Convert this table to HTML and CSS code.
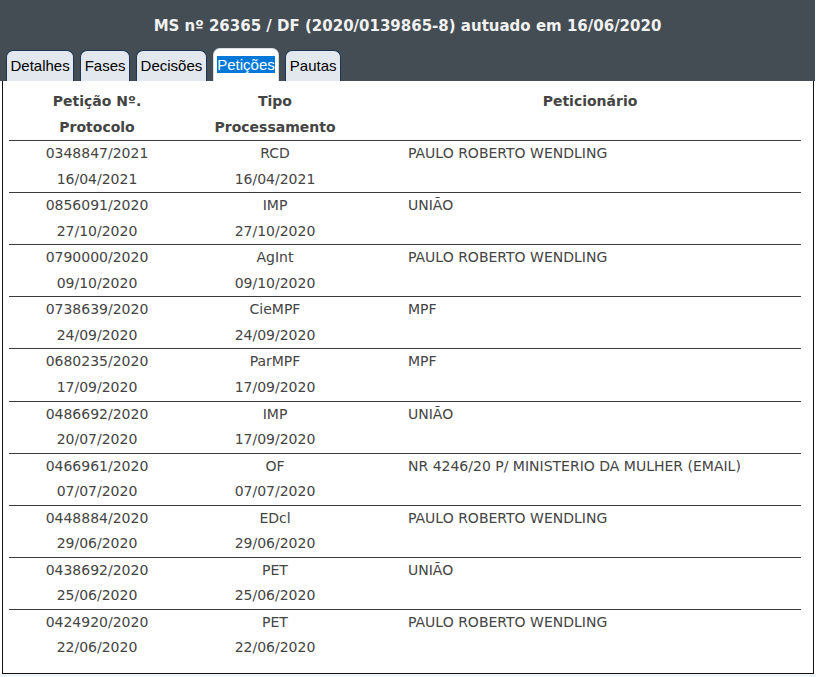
FILE: index.html
```html
<!DOCTYPE html>
<html lang="pt-BR">
<head>
<meta charset="utf-8">
<title>MS 26365</title>
<link rel="stylesheet" href="styles.css">
</head>
<body>
<div class="page">
  <header class="header">
    <h1 class="title">MS nº 26365 / DF (2020/0139865-8) autuado em 16/06/2020</h1>
    <nav class="tabs">
      <span class="tab">Detalhes</span>
      <span class="tab">Fases</span>
      <span class="tab">Decisões</span>
      <span class="tab tab-active"><span class="sel">Petições</span></span>
      <span class="tab">Pautas</span>
    </nav>
  </header>
  <main class="panel">
    <div class="table">
      <div class="row head">
        <div class="c1"><b>Petição Nº.</b><b>Protocolo</b></div>
        <div class="c2"><b>Tipo</b><b>Processamento</b></div>
        <div class="c3h"><b>Peticionário</b></div>
      </div>
      <div class="row"><div class="c1"><span>0348847/2021</span><span>16/04/2021</span></div><div class="c2"><span>RCD</span><span>16/04/2021</span></div><div class="c3"><span>PAULO ROBERTO WENDLING</span></div></div>
      <div class="row"><div class="c1"><span>0856091/2020</span><span>27/10/2020</span></div><div class="c2"><span>IMP</span><span>27/10/2020</span></div><div class="c3"><span>UNIÃO</span></div></div>
      <div class="row"><div class="c1"><span>0790000/2020</span><span>09/10/2020</span></div><div class="c2"><span>AgInt</span><span>09/10/2020</span></div><div class="c3"><span>PAULO ROBERTO WENDLING</span></div></div>
      <div class="row"><div class="c1"><span>0738639/2020</span><span>24/09/2020</span></div><div class="c2"><span>CieMPF</span><span>24/09/2020</span></div><div class="c3"><span>MPF</span></div></div>
      <div class="row"><div class="c1"><span>0680235/2020</span><span>17/09/2020</span></div><div class="c2"><span>ParMPF</span><span>17/09/2020</span></div><div class="c3"><span>MPF</span></div></div>
      <div class="row"><div class="c1"><span>0486692/2020</span><span>20/07/2020</span></div><div class="c2"><span>IMP</span><span>17/09/2020</span></div><div class="c3"><span>UNIÃO</span></div></div>
      <div class="row"><div class="c1"><span>0466961/2020</span><span>07/07/2020</span></div><div class="c2"><span>OF</span><span>07/07/2020</span></div><div class="c3"><span>NR 4246/20 P/ MINISTERIO DA MULHER (EMAIL)</span></div></div>
      <div class="row"><div class="c1"><span>0448884/2020</span><span>29/06/2020</span></div><div class="c2"><span>EDcl</span><span>29/06/2020</span></div><div class="c3"><span>PAULO ROBERTO WENDLING</span></div></div>
      <div class="row"><div class="c1"><span>0438692/2020</span><span>25/06/2020</span></div><div class="c2"><span>PET</span><span>25/06/2020</span></div><div class="c3"><span>UNIÃO</span></div></div>
      <div class="row"><div class="c1"><span>0424920/2020</span><span>22/06/2020</span></div><div class="c2"><span>PET</span><span>22/06/2020</span></div><div class="c3"><span>PAULO ROBERTO WENDLING</span></div></div>
    </div>
  </main>
  <div class="foot"></div>
</div>
</body>
</html>
```

FILE: styles.css
```css
* { box-sizing: border-box; }
html, body { margin: 0; padding: 0; }
body {
  background: #ffffff;
  font-family: "DejaVu Sans", Verdana, sans-serif;
  width: 816px;
  height: 677px;
  overflow: hidden;
}
.page { width: 816px; }
.header {
  background: #434d53;
  height: 81px;
  width: 815px;
  display: flex;
  flex-direction: column;
}
.title {
  margin: 0;
  height: 48px;
  padding-top: 16px;
  text-align: center;
  color: #f2f2f2;
  font-size: 15px;
  font-weight: bold;
  line-height: 20px;
}
.tabs {
  display: flex;
  align-items: flex-end;
  gap: 6px;
  padding-left: 6px;
  height: 33px;
}
.tab {
  font-family: "Liberation Sans", Arial, sans-serif;
  font-size: 15px;
  color: #000;
  background: #e3e8ef;
  border: 1px solid #1d3553;
  border-bottom: none;
  border-radius: 7px 7px 0 0;
  height: 31px;
  padding: 5px 3.5px 0 3.5px;
  line-height: 20px;
}
.tab-active {
  background: #ffffff;
  border-color: #d8dde3;
  height: 33px;
  padding-top: 6px;
}
.sel {
  background: #0078d7;
  color: #ffffff;
}
.panel {
  margin-left: 2px;
  width: 812px;
  height: 593px;
  border: 1px solid #111;
  border-top: none;
  background: #fff;
  padding: 8px 12px 0 6px;
}
.table { display: flex; flex-direction: column; }
.row {
  display: grid;
  grid-template-columns: 176px 180px 1fr;
  border-bottom: 1px solid #3c3c3c;
  color: #444;
  font-size: 14px;
  line-height: 25.55px;
}
.row:last-child { border-bottom: none; }
.row > div { display: flex; flex-direction: column; }
.c1, .c2 { text-align: center; }
.c3 { padding-left: 43px; }
.c3h { text-align: center; padding-left: 14px; }
.head { color: #444; }
.head b { font-weight: bold; }
.foot {
  height: 4px;
  background: #eef5fc;
}
```
